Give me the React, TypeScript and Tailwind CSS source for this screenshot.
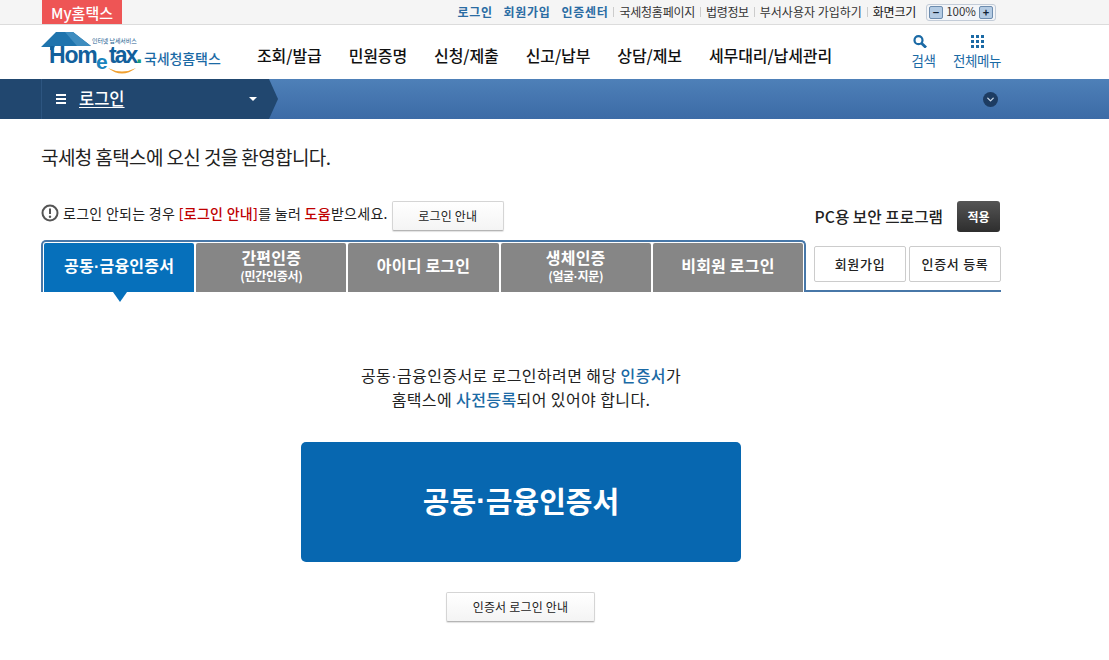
import React from "react";
import { ChevronDown } from "lucide-react";

const font = "font-['Malgun_Gothic','Noto_Sans_CJK_KR','Noto_Sans',sans-serif]";

const navItems = ["조회/발급", "민원증명", "신청/제출", "신고/납부", "상담/제보", "세무대리/납세관리"];

// the CJK face has a wide middle dot, the reference one is narrow
function Dot() {
  return <span className="font-['Liberation_Sans',sans-serif] leading-none">·</span>;
}

function Logo() {
  const latin = "absolute font-['Liberation_Sans',sans-serif] font-bold leading-none";
  return (
    <div className="relative w-[182px] h-[54px] shrink-0">
      <svg className="absolute left-0 top-0" width="100" height="54" viewBox="0 0 100 54">
        <path d="M0 22 L15 7 H32 L50 21 H14 L12 25 H9 V22 Z" fill="#1f74ad" />
        <path d="M24 7 H32 L50 21 H36 Z" fill="#3f8dbf" />
        <path d="M67 43 Q81 50 95 43 Q81 54 67 43 Z" fill="#f0a030" />
      </svg>
      <span className={`${latin} left-[8px] top-[19px] text-[23px] tracking-[-1.2px] text-[#12609c]`}>Hom</span>
      <span className={`${latin} left-[55px] top-[26px] text-[21px] text-[#1a84bd]`}>e</span>
      <span className={`${latin} left-[68px] top-[19px] text-[23px] tracking-[-2px] text-[#12609c]`}>tax</span>
      <span className={`${latin} left-[95px] top-[19px] text-[23px] text-[#1a9a7a]`}>.</span>
      <span className="absolute left-[51px] top-[13px] text-[6px] leading-[5px] tracking-[-0.1px] whitespace-nowrap text-[#1b5e8f]">인터넷 납세서비스</span>
      <span className="absolute left-[103px] top-[24px] text-[14px] leading-[18px] tracking-[-0.1px] font-medium text-[#1b6aa5] whitespace-nowrap">국세청홈택스</span>
    </div>
  );
}

function Sep() {
  return <span className="w-px h-[10px] bg-[#ccc] mx-[5px]" />;
}

function ZoomButton({ children }: { children: React.ReactNode }) {
  return (
    <span className="w-[14px] h-[13px] flex items-center justify-center bg-[#b4cbe3] border border-[#6d8cae] rounded-[2px] text-[11px] leading-none font-bold text-[#123]">
      {children}
    </span>
  );
}

function TopBar() {
  return (
    <div className="h-[25px] bg-[#f5f5f5] border-b border-[#dcdcdc]">
      <div className="w-[960px] ml-[41px] flex items-start justify-between">
        <div className="ml-px w-[80px] h-[24px] bg-[#ee5555] text-white text-[15px] font-medium leading-[25px] text-center whitespace-nowrap">My홈택스</div>
        <div className="flex items-center h-[24px] pr-[5px] text-[12px] whitespace-nowrap">
          <span className="font-bold text-[#2a6ca3] tracking-[0.6px]">로그인</span>
          <span className="font-bold text-[#2a6ca3] tracking-[0.7px] ml-[11px]">회원가입</span>
          <span className="font-bold text-[#2a6ca3] tracking-[0.7px] ml-[11px]">인증센터</span>
          <Sep />
          <span className="text-[#333] tracking-[-0.25px]">국세청홈페이지</span>
          <Sep />
          <span className="text-[#333] tracking-[-0.35px]">법령정보</span>
          <Sep />
          <span className="text-[#333]">부서사용자 가입하기</span>
          <Sep />
          <span className="text-[#111] tracking-[-0.25px]">화면크기</span>
          <div className="ml-[10px] w-[70px] h-[17px] flex items-center justify-between px-[2px] border border-[#c3ccd8] rounded-[3px] bg-[#f3f5f8]">
            <ZoomButton>−</ZoomButton>
            <span className="text-[11.5px] text-[#333]">100%</span>
            <ZoomButton>+</ZoomButton>
          </div>
        </div>
      </div>
    </div>
  );
}

function Header() {
  return (
    <div className="h-[54px] bg-white">
      <div className="w-[960px] ml-[41px] h-full flex items-center">
        <Logo />
        <nav className="ml-[34px] mt-[6px] flex gap-[27px] text-[16px] text-[#111] font-medium tracking-[-0.1px] whitespace-nowrap">
          {navItems.map(item => <span key={item}>{item}</span>)}
        </nav>
        <div className="ml-auto flex gap-[17px] text-[13.5px] text-[#1b6aa5] tracking-[-0.4px] whitespace-nowrap text-center">
          <div className="flex flex-col items-center w-[25px]">
            <svg width="14" height="13" viewBox="0 0 14 13" className="mb-[4px] -ml-[8px]">
              <circle cx="5.5" cy="5.2" r="4" fill="none" stroke="#1b6aa5" strokeWidth="2.2" />
              <path d="M8.5 8.2 L13 12.6" stroke="#1b6aa5" strokeWidth="2.8" />
            </svg>
            <span className="leading-[17px]">검색</span>
          </div>
          <div className="flex flex-col items-center w-[48px]">
            <div className="grid grid-cols-[3px_3px_3px] gap-[2px] w-[13px] h-[13px] mb-[4px]">
              {[0, 1, 2, 3, 4, 5, 6, 7, 8].map(i => <span key={i} className="w-[3px] h-[3px] bg-[#1b6aa5]" />)}
            </div>
            <span className="leading-[17px]">전체메뉴</span>
          </div>
        </div>
      </div>
    </div>
  );
}

function LoginBar() {
  return (
    <div className="h-[40px] flex bg-gradient-to-b from-[#4e80b8] to-[#3c6ba6]">
      <div className="w-[269px] bg-[#21476f] relative flex">
        <div className="ml-[41px] border-l border-[#2d5580] flex items-center w-[228px] pl-[14px]">
          <div className="flex flex-col gap-[2px] w-[10px]">
            <span className="h-[2px] bg-white" />
            <span className="h-[2px] bg-white" />
            <span className="h-[2px] bg-white" />
          </div>
          <span className="ml-[13px] mb-[1px] text-white text-[16.5px] font-medium underline underline-offset-2 decoration-1 whitespace-nowrap">로그인</span>
          <span className="ml-auto mr-[12px] w-0 h-0 border-x-[4px] border-x-transparent border-t-[4px] border-t-white" />
        </div>
        <svg className="absolute left-[269px] top-0" width="9" height="40" viewBox="0 0 9 40">
          <path d="M0 0 L9 20 L0 40 Z" fill="#21476f" />
        </svg>
      </div>
      <div className="ml-[714px] flex items-center">
        <span className="w-[15px] h-[15px] rounded-full bg-[#1d3c62] flex items-center justify-center">
          <ChevronDown size={11} strokeWidth={3} className="text-[#c8d6e6]" />
        </span>
      </div>
    </div>
  );
}

function Tab({ title, sub, active }: { title: React.ReactNode; sub?: React.ReactNode; active?: boolean }) {
  return (
    <div className={`relative flex-1 h-[49px] pb-[4px] rounded-t-[2px] flex flex-col items-center justify-center text-white font-bold whitespace-nowrap ${active ? "bg-[#0670bb]" : "bg-[#868686]"}`}>
      <span className="text-[16px] leading-[19px] tracking-[0.2px]">{title}</span>
      {sub && <span className="text-[12px] leading-[17px] tracking-[-0.3px]">{sub}</span>}
      {active && <span className="absolute left-[69px] top-[49px] w-0 h-0 border-x-[7px] border-x-transparent border-t-[10px] border-t-[#0670bb]" />}
    </div>
  );
}

function GrayButton({ children, className }: { children: React.ReactNode; className: string }) {
  return (
    <div className={`flex items-center justify-center bg-gradient-to-b from-white to-[#f4f4f4] border border-[#d5d5d5] border-b-[#b5b5b5] rounded-[2px] shadow-[0_1px_1px_rgba(0,0,0,0.12)] text-[12px] tracking-[0.2px] text-[#222] whitespace-nowrap ${className}`}>
      {children}
    </div>
  );
}

function SideButton({ children }: { children: React.ReactNode }) {
  return (
    <div className="w-[92px] h-[36px] flex items-center justify-center bg-white border border-[#ccc] rounded-[2px] text-[13px] font-medium tracking-[0.7px] text-[#222] whitespace-nowrap">
      {children}
    </div>
  );
}

function Content() {
  return (
    <div className="w-[960px] ml-[41px]">
      <h1 className="mt-[25px] text-[19px] leading-[26px] font-normal text-[#222] tracking-[-0.6px]">국세청 홈택스에 오신 것을 환영합니다.</h1>

      <div className="mt-[31px] h-[31px] flex items-start">
        <svg width="18" height="18" viewBox="0 0 18 18" className="mt-[3px] shrink-0">
          <circle cx="9" cy="9" r="7.5" fill="none" stroke="#555" strokeWidth="2" />
          <path d="M9 4.5 V10" stroke="#555" strokeWidth="2" />
          <circle cx="9" cy="12.8" r="1.2" fill="#555" />
        </svg>
        <p className="ml-[4px] text-[14px] leading-[24px] text-[#222] tracking-[0.28px] whitespace-nowrap">
          로그인 안되는 경우 <span className="text-[#c00000] font-medium">[로그인 안내]</span>를 눌러 <span className="text-[#c00000] font-medium">도움</span>받으세요.
        </p>
        <GrayButton className="ml-[4px] w-[112px] h-[30px]">로그인 안내</GrayButton>
        <span className="ml-auto text-[15.7px] leading-[31px] font-medium text-[#222] whitespace-nowrap">PC용 보안 프로그램</span>
        <div className="ml-[14px] mr-px w-[43px] h-[31px] flex items-center justify-center rounded-[3px] bg-gradient-to-b from-[#555] to-[#2e2e2e] text-white text-[12px] font-bold">적용</div>
      </div>

      <div className="mt-[8px] flex">
        <div className="w-[766px] h-[52px] pt-[1px] px-[1px] border-2 border-b-0 border-[#4777a8] rounded-t-[5px] flex gap-[2px]">
          <Tab title={<>공동<Dot />금융인증서</>} active />
          <Tab title="간편인증" sub="(민간인증서)" />
          <Tab title="아이디 로그인" />
          <Tab title="생체인증" sub={<>(얼굴<Dot />지문)</>} />
          <Tab title="비회원 로그인" />
        </div>
        <div className="flex-1 h-[52px] border-b-2 border-[#4777a8] pl-[8px] pt-[6px] flex gap-[3px]">
          <SideButton>회원가입</SideButton>
          <SideButton>인증서 등록</SideButton>
        </div>
      </div>

      <div className="mt-[71px] flex flex-col items-center">
        <p className="text-[16px] leading-[24px] text-center text-[#222] tracking-[0.4px]">
          공동<Dot />금융인증서로 로그인하려면 해당 <span className="text-[#1b6aa5] font-medium">인증서</span>가<br />
          홈택스에 <span className="text-[#1b6aa5] font-medium">사전등록</span>되어 있어야 합니다.
        </p>
        <div className="mt-[31px] w-[440px] h-[120px] pb-[2px] rounded-[5px] bg-[#0767b0] flex items-center justify-center text-white text-[29px] font-bold">공동<Dot />금융인증서</div>
        <GrayButton className="mt-[30px] mr-px w-[149px] h-[30px]">인증서 로그인 안내</GrayButton>
      </div>
    </div>
  );
}

export default function App() {
  return (
    <div className={`${font} w-[1109px] h-[660px] overflow-hidden bg-white`}>
      <TopBar />
      <Header />
      <LoginBar />
      <Content />
    </div>
  );
}
